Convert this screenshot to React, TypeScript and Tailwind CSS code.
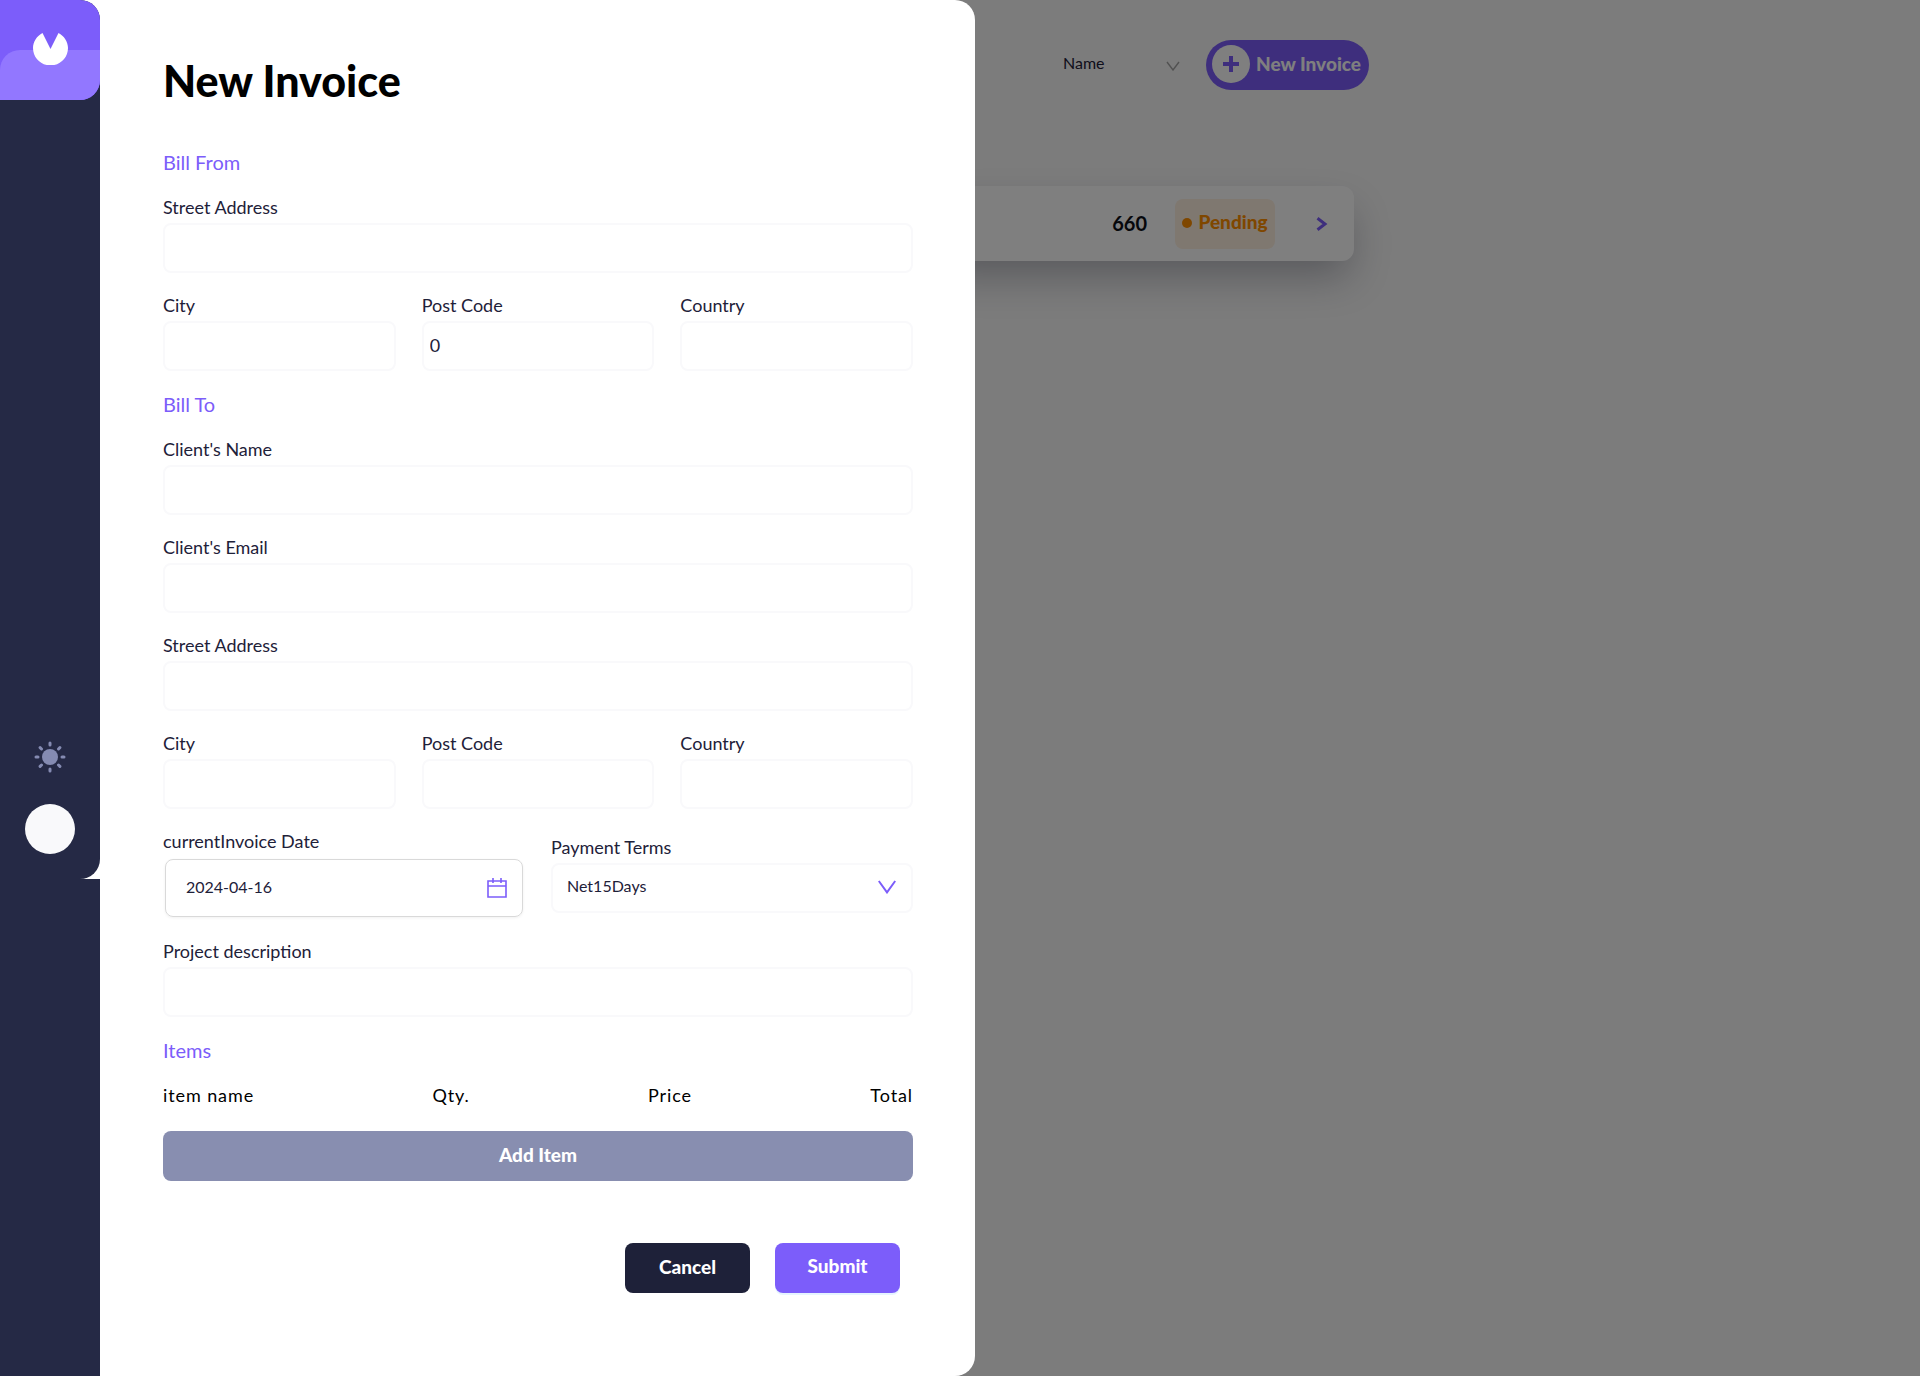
import { useState } from "react";

function Field({ id, label, value = "", type = "text" }: { id: string; label: string; value?: string; type?: string }) {
  return (
    <div className="min-w-0">
      <label htmlFor={id} className="block pb-1 text-lg leading-6 text-[#1e2139]">
        {label}
      </label>
      <input
        id={id}
        type={type}
        defaultValue={value}
        className="block h-[50px] w-full rounded-lg border-2 border-[#f9f9fb] bg-white px-1.5 pb-0.5 text-lg text-[#1e2139] outline-none"
      />
    </div>
  );
}

function SectionTitle({ children }: { children: string }) {
  return <h2 className="text-xl leading-[26px] text-[#7c5dfa]">{children}</h2>;
}

function Logo() {
  return (
    <div className="relative h-[100px] overflow-hidden rounded-r-[20px] bg-[#7c5dfa]">
      <div className="absolute inset-x-0 bottom-0 h-1/2 rounded-tl-[20px] bg-[#9277ff]" />
      <svg viewBox="0 0 35 32" className="absolute left-[33px] top-[33px] h-8 w-[35px]" aria-hidden="true">
        <path
          d="M9.5 0 17.5 16 25.5 0C31 2.8 35 8.8 35 15c0 9.8-7.8 17.4-17.5 17.4S0 24.8 0 15C0 8.8 4 2.8 9.5 0Z"
          fill="#fff"
        />
      </svg>
    </div>
  );
}

function Sidebar() {
  return (
    <aside className="z-20 w-[100px] shrink-0 bg-[#252945]">
      <div className="bg-white">
        <div className="flex h-[879px] flex-col justify-between rounded-r-[20px] bg-[#252945]">
          <Logo />
          <div className="flex flex-col items-center gap-[31px] pb-[25px]">
            <button aria-label="Toggle theme" className="h-8 w-8">
              <svg viewBox="0 0 32 32" className="h-8 w-8" fill="none" stroke="#858bb2" strokeWidth="3" strokeLinecap="round">
                <circle cx="16" cy="16" r="8" fill="#858bb2" stroke="none" />
                <path d="M16 2v2M16 28v2M2 16h2M28 16h2M6.1 6.6l1.4 1.4M24.5 24l1.4 1.4M6.1 25.4 7.5 24M24.5 8l1.4-1.4" />
              </svg>
            </button>
            <div className="h-[50px] w-[50px] rounded-full bg-[#f9f9fb]" />
          </div>
        </div>
      </div>
    </aside>
  );
}

function InvoiceForm() {
  const [date, setDate] = useState("2024-04-16");
  return (
    <form
      className="z-20 w-[875px] shrink-0 rounded-r-[20px] bg-white pb-20 pl-[63px] pr-[62px] pt-14"
      onSubmit={(e) => e.preventDefault()}
    >
      <h1 className="text-[43px] font-black leading-[50px] text-black">New Invoice</h1>
      <div className="mt-[43px] flex flex-col gap-5">
        <SectionTitle>Bill From</SectionTitle>
        <Field id="from-street" label="Street Address" />
        <div className="grid grid-cols-3 gap-[26px]">
          <Field id="from-city" label="City" />
          <Field id="from-post" label="Post Code" value="0" />
          <Field id="from-country" label="Country" />
        </div>
        <SectionTitle>Bill To</SectionTitle>
        <Field id="client-name" label="Client's Name" />
        <Field id="client-email" label="Client's Email" type="email" />
        <Field id="to-street" label="Street Address" />
        <div className="grid grid-cols-3 gap-[26px]">
          <Field id="to-city" label="City" />
          <Field id="to-post" label="Post Code" />
          <Field id="to-country" label="Country" />
        </div>
        <div className="grid grid-cols-2 items-center gap-[26px]">
          <div>
            <label htmlFor="date" className="block pb-1 text-lg leading-6 text-[#1e2139]">
              currentInvoice Date
            </label>
            <div className="m-0.5 flex h-[58px] items-center rounded-lg border border-[#d9d9d9] pl-5 pr-[15px] shadow-[0_1px_3px_rgba(0,0,0,0.06)]">
              <input
                id="date"
                value={date}
                onChange={(e) => setDate(e.target.value)}
                className="min-w-0 flex-1 bg-transparent pb-0.5 text-base text-[#1e2139] outline-none"
              />
              <button type="button" aria-label="Open calendar">
                <svg viewBox="0 0 20 20" className="h-5 w-5" fill="none" stroke="#7c5dfa" strokeWidth="1.6">
                  <path d="M1 3h18v16H1zM1 8h18M6 0v5M14 0v5" />
                </svg>
              </button>
            </div>
          </div>
          <div>
            <label htmlFor="terms" className="block pb-1 text-lg leading-6 text-[#1e2139]">
              Payment Terms
            </label>
            <div className="relative">
              <select
                id="terms"
                className="block h-[50px] w-full appearance-none rounded-lg border-2 border-[#f9f9fb] bg-white pb-1 pl-3.5 text-base text-[#1e2139] outline-none"
              >
                <option>Net15Days</option>
              </select>
              <svg
                viewBox="0 0 18 14"
                className="pointer-events-none absolute right-[17px] top-[17px] h-3.5 w-[18px]"
                fill="none"
                stroke="#7c5dfa"
                strokeWidth="2"
              >
                <path d="M.8 1 9 12.4 17.2 1" />
              </svg>
            </div>
          </div>
        </div>
        <Field id="description" label="Project description" />
        <SectionTitle>Items</SectionTitle>
        <div className="flex justify-between text-lg leading-6 tracking-wider text-black">
          <span>item name</span>
          <span>Qty.</span>
          <span>Price</span>
          <span>Total</span>
        </div>
      </div>
      <button type="button" className="mt-6 h-[50px] w-full rounded-lg bg-[#888eb0] pb-0.5 text-[19px] font-black text-white">
        Add Item
      </button>
      <div className="mt-[62px] flex justify-end gap-[25px] pr-[13px]">
        <button type="button" className="h-[50px] w-[125px] rounded-lg bg-[#1e2139] pb-0.5 text-[19px] font-black text-white">
          Cancel
        </button>
        <button
          type="submit"
          className="h-[50px] w-[125px] rounded-lg bg-[#7c5dfa] pb-1 text-[19px] font-black text-white shadow-[0_2px_0_rgba(5,145,255,0.1)]"
        >
          Submit
        </button>
      </div>
    </form>
  );
}

function InvoiceList() {
  return (
    <main className="min-w-0 flex-1 pt-10">
      <div className="flex items-center pl-[88px]">
        <div className="relative w-[143px]">
          <select aria-label="Filter" className="block w-full appearance-none pb-1 text-base leading-6 text-[#1e2139]">
            <option>Name</option>
          </select>
          <svg
            viewBox="0 0 14 10"
            className="pointer-events-none absolute right-[26px] top-2.5 h-2.5 w-3.5"
            fill="none"
            stroke="#a3a3a3"
            strokeWidth="1.4"
          >
            <path d="M1 1l6 8 6-8" />
          </svg>
        </div>
        <button className="flex h-[50px] w-[163px] items-center gap-1.5 whitespace-nowrap rounded-full bg-[#7c5dfa] pb-0.5 pl-1.5 text-[19px] font-black text-white">
          <span className="flex h-[38px] w-[38px] shrink-0 items-center justify-center rounded-full bg-white">
            <svg viewBox="0 0 16 16" className="h-4 w-4" stroke="#7c5dfa" strokeWidth="4">
              <path d="M8 0v16M0 8h16" />
            </svg>
          </span>
          New Invoice
        </button>
      </div>
      <div className="-ml-10 mt-24 flex h-[75px] w-[419px] items-center justify-end rounded-xl bg-white pr-[26px] shadow-[0_20px_40px_-5px_rgba(30,33,57,0.32)]">
        <span className="pb-0.5 text-xl font-bold text-[#0c0e16]">660</span>
        <span className="ml-7 flex h-[50px] w-[100px] items-center justify-center gap-1.5 rounded-lg bg-[#fff0e0] pb-0.5 text-[19px] font-black text-[#ff8f00]">
          <span className="h-2.5 w-2.5 rounded-full bg-[#ff8f00]" />
          Pending
        </span>
        <svg viewBox="0 0 12 14" className="ml-[41px] h-3.5 w-3" fill="none" stroke="#7c5dfa" strokeWidth="3">
          <path d="M1.5 1.2 9 7l-7.5 5.8" />
        </svg>
      </div>
    </main>
  );
}

export default function App() {
  return (
    <div className="relative flex min-h-screen overflow-hidden bg-[#f8f8f8] font-['Lato',sans-serif]">
      <Sidebar />
      <InvoiceForm />
      <InvoiceList />
      <div className="absolute inset-0 z-10 bg-black/50" />
    </div>
  );
}
